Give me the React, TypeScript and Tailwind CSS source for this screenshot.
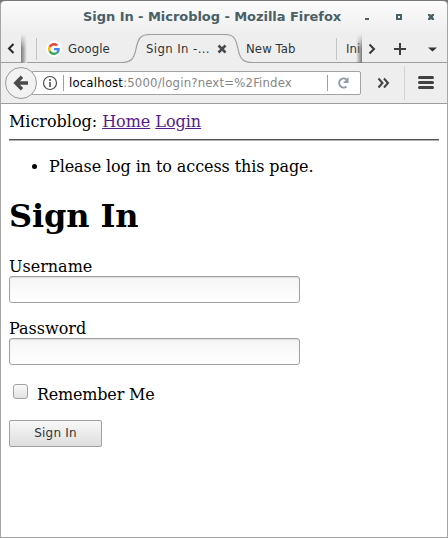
import React from "react";

const UI = "font-['DejaVu_Sans_Condensed','DejaVu_Sans',sans-serif] [font-stretch:condensed]";
const WIDE = "font-['DejaVu_Sans',sans-serif]";

function TitleBar() {
  return (
    <header className="flex h-[33px] shrink-0 items-center bg-gradient-to-b from-[#fcfcfc] to-[#eeeeee] pl-[82px] text-[#4a5f66]">
      <h1 className={`${WIDE} mt-[-1px] w-[276px] whitespace-nowrap text-[13px] leading-[18px] font-bold tracking-[-0.05px]`}>
        Sign In - Microblog - Mozilla Firefox
      </h1>
      <svg className="mt-[-1px] h-[20px] w-[80px]" viewBox="0 0 80 20" fill="currentColor">
        <path d="M6 11h4v2H6z" />
        <path fillRule="evenodd" d="M37 7h6v6h-6zM39 9v2h2V9z" />
        <path d="M69 7h2l1 1 1-1h2v1.5L73.7 10l1.3 1.5V13h-2l-1-1-1 1h-2v-1.5l1.3-1.5L69 8.5z" />
      </svg>
    </header>
  );
}

function GoogleLogo() {
  return (
    <span className="flex size-4 items-center justify-center rounded-full bg-white">
      <svg className="size-[12px]" viewBox="0 0 48 48">
        <path fill="#EA4335" d="M24 9.5c3.54 0 6.71 1.22 9.21 3.6l6.85-6.85C35.9 2.38 30.47 0 24 0 14.62 0 6.51 5.38 2.56 13.22l7.98 6.19C12.43 13.72 17.74 9.5 24 9.5z" />
        <path fill="#4285F4" d="M46.98 24.55c0-1.57-.15-3.09-.38-4.55H24v9.02h12.94c-.58 2.96-2.26 5.48-4.78 7.18l7.73 6c4.51-4.18 7.09-10.36 7.09-17.65z" />
        <path fill="#FBBC05" d="M10.53 28.59A14.5 14.5 0 0 1 10.53 19.41l-7.98-6.19a24 24 0 0 0 0 21.56z" />
        <path fill="#34A853" d="M24 48c6.48 0 11.93-2.13 15.89-5.81l-7.73-6c-2.15 1.45-4.92 2.3-8.16 2.3-6.26 0-11.57-4.22-13.47-9.91l-7.98 6.19C6.51 42.62 14.62 48 24 48z" />
      </svg>
    </span>
  );
}

function TabStrip() {
  return (
    <div className={`${UI} relative flex h-[29px] shrink-0 items-center bg-[#eeeeee] text-[13px] leading-[17px] tracking-[0.1px] text-[#2e3436]`}>
      <svg className="pointer-events-none absolute inset-0 h-[29px] w-[446px]" viewBox="0 0 446 29" fill="none">
        <path d="M0 28.5H120C130 28.5 133 25 135 15C137 5 139 0.5 149 0.5H224C233 0.5 235 5 237 15C239 25 242 28.5 252 28.5H446" stroke="#9b9fa1" strokeWidth="1.2" />
      </svg>
      <svg className="h-[28px] w-[20px]" viewBox="0 0 20 28" fill="none">
        <path d="M12.5 9L8 13.5l4.5 4.5" stroke="#232729" strokeWidth="2" />
      </svg>
      <div className="h-full w-[6px] self-start bg-gradient-to-r from-[#77797a] to-[#eeeeee] [mask-image:linear-gradient(transparent,black_50%)]" />
      <div className="ml-[9px] h-[22px] w-px bg-[#c4c4c4]" />
      <div className="ml-[9px] flex w-[100px] items-center gap-[6px]">
        <GoogleLogo />
        <span>Google</span>
      </div>
      <div className="flex w-[100px] items-center">
        <span className="w-[71px] whitespace-nowrap tracking-[0.4px]">Sign In -...</span>
        <svg className="size-[10px]" viewBox="0 0 10 10">
          <path d="M1.5 1.5l7 7m0-7l-7 7" stroke="#454a4c" strokeWidth="2.5" />
        </svg>
      </div>
      <span className="w-[90px] whitespace-nowrap">New Tab</span>
      <div className="h-[22px] w-px bg-[#c4c4c4]" />
      <span className="ml-[9px] w-[15px] overflow-hidden">Ini</span>
      <div className="-ml-[5px] h-full w-[6px] bg-gradient-to-l from-[#77797a] to-transparent [mask-image:linear-gradient(transparent,black_50%)]" />
      <svg className="h-[28px] w-[84px]" viewBox="361 0 84 28" fill="none">
        <path d="M368.5 9.5l4.5 4.5-4.5 4.5" stroke="#34393b" strokeWidth="2" />
        <path d="M393 14h12M399 8v12" stroke="#3b3f41" strokeWidth="2" />
        <path d="M427 12.5h9l-4.5 4z" fill="#2e3436" />
      </svg>
    </div>
  );
}

function NavBar() {
  return (
    <div className="flex h-[41px] shrink-0 items-center border-b border-[#9d9d9d] bg-[#eeeeee] pl-[4px]">
      <button className="z-10 flex size-[32px] shrink-0 items-center justify-center rounded-full border border-[#999999] bg-[#f2f2f2]" aria-label="Back">
        <svg className="size-[16px]" viewBox="0 0 16 16" fill="none" stroke="#4b4b4b" strokeWidth="3.4">
          <path d="M9 1.8L2.8 8 9 14.2M3 8h12" />
        </svg>
      </button>
      <div className={`${UI} -ml-[5px] flex h-[24px] w-[329px] shrink-0 items-center rounded-r-[2px] border border-[#a3a3a3] bg-white pl-[9px] text-[13px]`}>
        <svg className="size-[16px] shrink-0" viewBox="0 0 16 16" fill="none" stroke="#4d4d4d">
          <circle cx="8" cy="8" r="6.5" strokeWidth="1.2" />
          <path d="M8 7v5M8 4v2" strokeWidth="1.6" />
        </svg>
        <div className="ml-[5px] h-[16px] w-px bg-[#a0a0a0]" />
        <span className="ml-[5px] w-[258px] whitespace-nowrap tracking-[0.18px] text-[#858585]">
          <span className="text-black">localhost</span>:5000/login?next=%2Findex
        </span>
        <div className="h-[16px] w-px bg-[#a0a0a0]" />
        <svg className="ml-[7px] size-[16px]" viewBox="0 0 16 16" fill="none">
          <path d="M11.5 4.5A4.5 4.5 0 1 0 11.5 11.5" stroke="#929ba5" strokeWidth="2" />
          <path d="M13.5 2v6H8z" fill="#929ba5" />
        </svg>
      </div>
      <svg className="h-[40px] w-[86px]" viewBox="361 0 86 40" fill="none" stroke="#414141">
        <path d="M378.5 15.5l4 4.5-4 4.5M384 15.5l4 4.5-4 4.5" strokeWidth="2" />
        <path d="M404.5 3v34" stroke="#d3d3d3" />
        <path d="M419.5 14.5h13M419.5 19.5h13M419.5 24.5h13" strokeWidth="3" strokeLinecap="round" />
      </svg>
    </div>
  );
}

function Field({ id, label, type }: { id: string; label: string; type: string }) {
  return (
    <div className="mb-4 flex flex-col items-start">
      <label htmlFor={id} className="h-[19px] leading-[19px]">{label}</label>
      <input
        id={id}
        type={type}
        className="h-[27px] w-[291px] rounded-[3px] border border-[#a0a0a0] bg-gradient-to-b from-[#f5f5f5] to-white px-1 shadow-[inset_0_1px_1px_#dddddd] outline-none"
      />
    </div>
  );
}

function LoginPage() {
  return (
    <main className="flex-1 bg-white px-2 pt-2 font-['DejaVu_Serif',serif] text-[16px] leading-[19px] text-black">
      <div className="tracking-[-0.03px]">
        Microblog: <a href="#home" className="text-[#551a8b] underline">Home</a>{" "}
        <a href="#login" className="text-[#551a8b] underline">Login</a>
      </div>
      <hr className="mt-2 h-[2px] border-t border-b border-t-[#555555] border-b-[#b0b0b0]" />
      <ul className="mt-4 list-disc pl-10 tracking-[-0.09px]">
        <li>Please log in to access this page.</li>
      </ul>
      <h1 className="mt-[21px] text-[32px] leading-[38px] font-bold tracking-[-0.12px]">Sign In</h1>
      <form className="mt-[22px]" onSubmit={(e) => e.preventDefault()}>
        <Field id="username" label="Username" type="text" />
        <Field id="password" label="Password" type="password" />
        <label className="mt-[20px] flex h-[19px] items-center tracking-[-0.2px]">
          <input
            type="checkbox"
            className="mt-[-6px] mr-[9px] ml-[4px] size-[15px] appearance-none rounded-[3px] border border-[#a2a2a2] bg-gradient-to-b from-[#fafafa] to-[#e2e2e2]"
          />
          Remember Me
        </label>
        <button className={`${WIDE} mt-4 flex h-[27px] w-[93px] items-center justify-center rounded-[2px] border border-[#a0a0a0] bg-gradient-to-b from-[#f8f8f8] to-[#dedede] text-[12px] tracking-[0.2px] text-[#2e3436]`}>
          Sign In
        </button>
      </form>
    </main>
  );
}

export default function App() {
  return (
    <div className="h-[538px] w-[448px] overflow-hidden bg-[#777777]">
      <div className="flex h-[538px] w-[448px] flex-col overflow-hidden rounded-t-[5px] border border-[#a5a5a5] border-t-[#777777]">
        <TitleBar />
        <TabStrip />
        <NavBar />
        <LoginPage />
      </div>
    </div>
  );
}
